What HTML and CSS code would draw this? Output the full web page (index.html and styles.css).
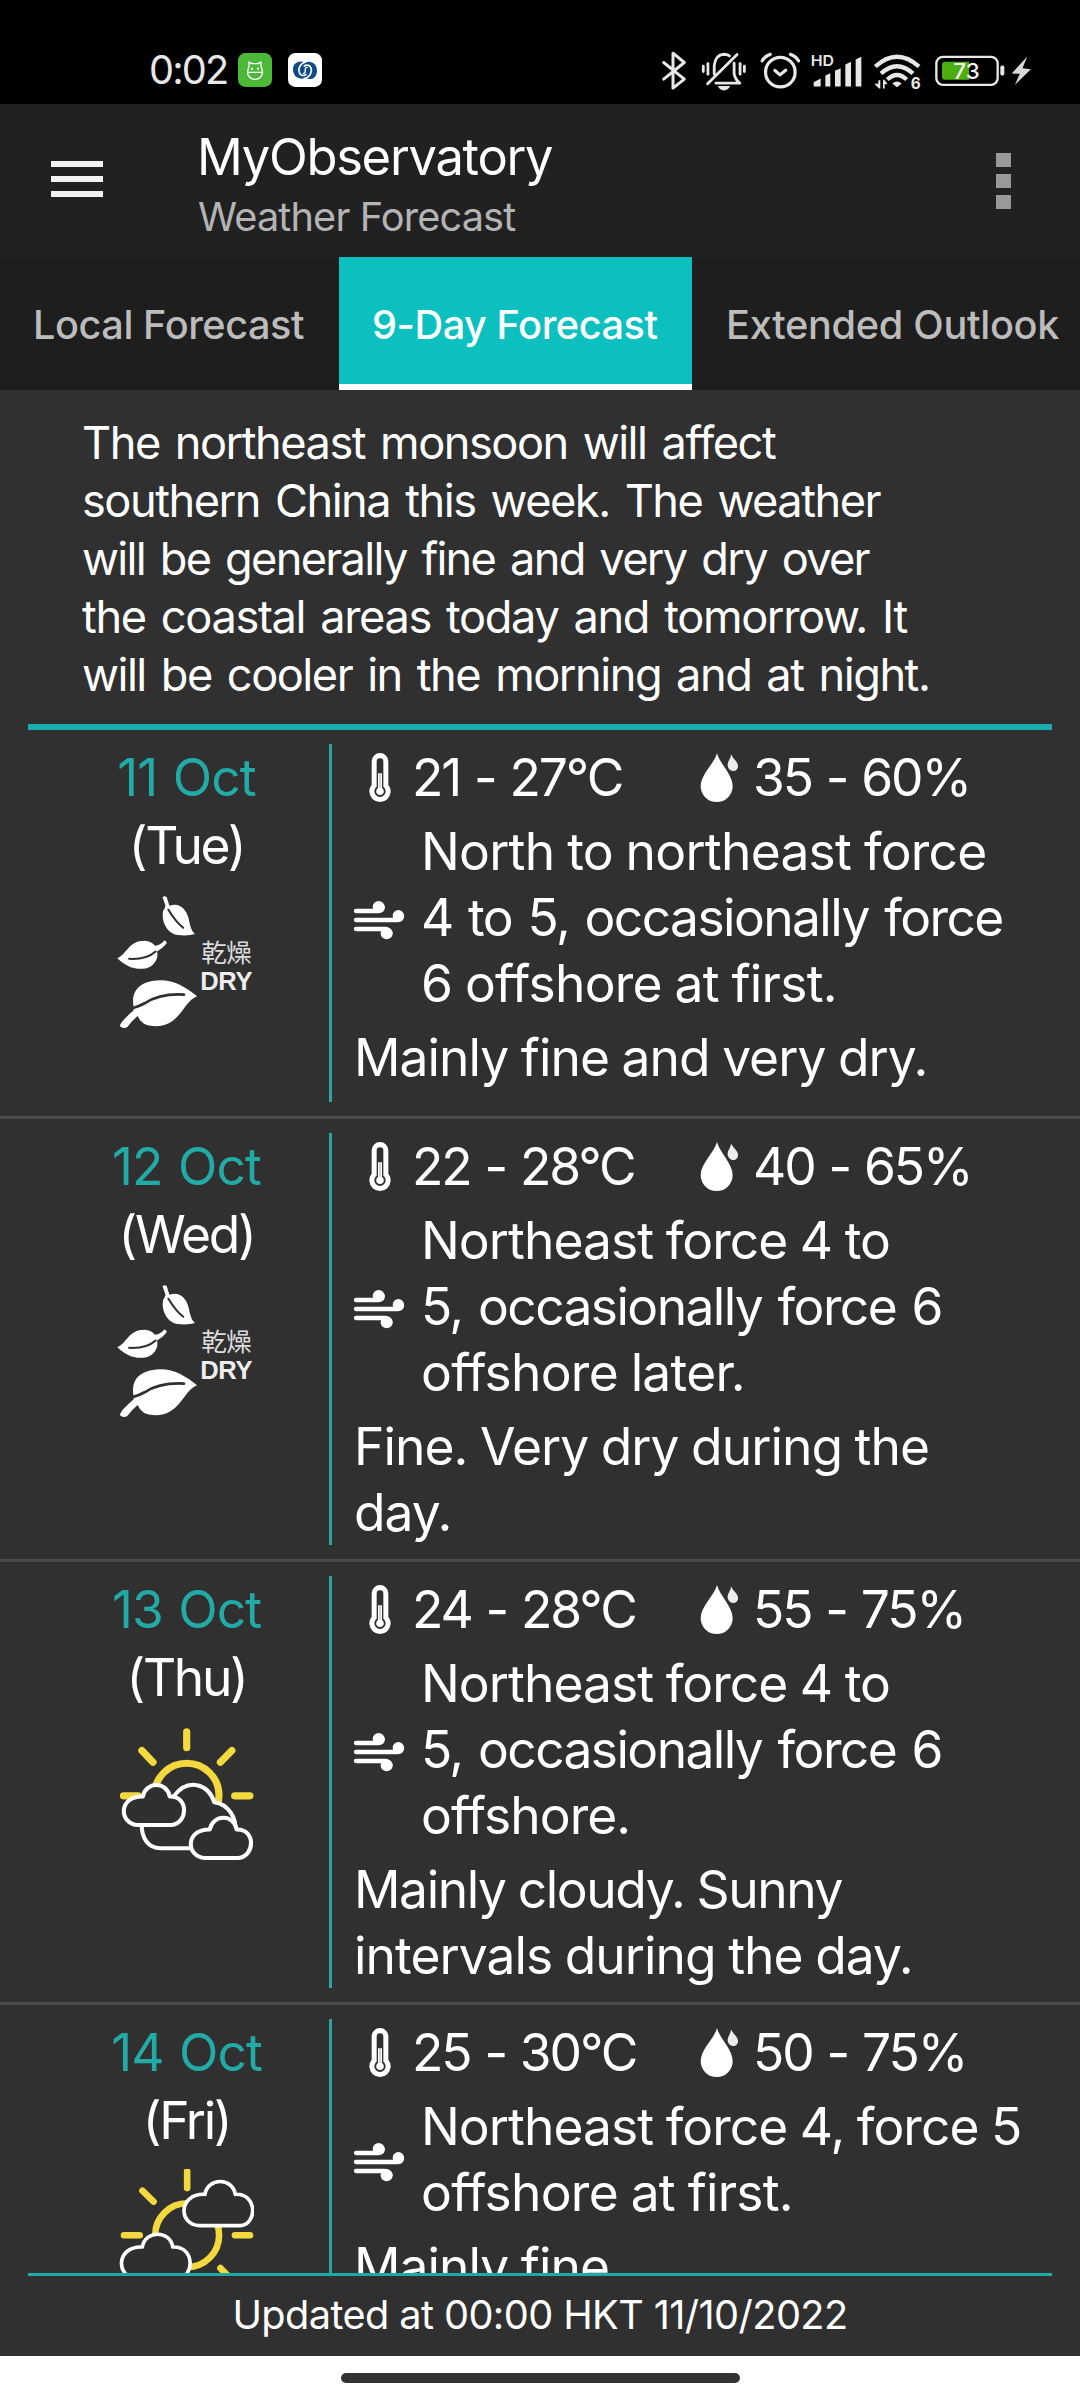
FILE: index.html
```html
<!DOCTYPE html>
<html lang="en">
<head>
<meta charset="utf-8">
<title>MyObservatory</title>
<link rel="stylesheet" href="styles.css">
</head>
<body>
<svg class="defs" aria-hidden="true">
  <symbol id="thermo" viewBox="72 36 66 147">
    <path fill="#fff" d="M80 61a25 25 0 0 1 50 0V131a32 32 0 1 1-50 0Z"/>
    <path fill="#303030" d="M95 62a10 10 0 0 1 20 0V137a17 17 0 1 1-20 0Z"/>
    <path fill="#fff" d="M99 97H111V141a11.500 11.500 0 1 1-12 0Z"/>
    <path stroke="#777" stroke-width="2" d="M105 97V140"/>
  </symbol>
  <symbol id="drop" viewBox="1066 36 114 147">
    <path fill="#fff" d="M1117 36C1124 66 1164 100 1164 136A48 47 0 0 1 1068 136C1068 100 1110 66 1117 36Z"/>
    <path fill="#ececec" d="M1159 40C1164 53 1180 62 1180 75C1180 86 1172 91 1165 90C1154 89 1148 79 1149 70C1150 60 1159 52 1159 40Z"/>
  </symbol>
  <symbol id="wind" viewBox="24 480 156 120">
    <g fill="none" stroke="#fff" stroke-width="13" stroke-linecap="round">
      <path d="M33 513H100Q113 512 113 501M33 540H158Q171 539 171 527M33 567H118Q131 567 136 580"/>
    </g>
    <g fill="#fff"><circle cx="101" cy="501" r="18"/><circle cx="160" cy="527" r="17"/><circle cx="125" cy="580" r="18"/></g>
  </symbol>
  <symbol id="dry" viewBox="340 525 400 410" preserveAspectRatio="none">
    <g fill="#fff">
      <path d="M472 535Q477 529 484 534L492 560C525 548 545 575 550 610Q555 635 566 645Q545 652 515 648C480 640 468 600 474 575Q482 562 480 558Z"/>
      <path d="M341 717C370 705 372 665 420 665Q440 666 450 680Q468 677 477 664Q486 666 483 674Q470 690 456 697C462 720 445 749 410 749C380 749 360 735 341 717Z"/>
      <path d="M388 862C380 815 405 785 465 783C510 783 540 805 572 831C530 848 525 920 450 921Q410 920 400 890Q382 905 370 923Q358 930 348 920Q352 905 388 874Z"/>
    </g>
    <g fill="none" stroke="#303030" stroke-linecap="round">
      <path stroke-width="6" d="M489 572Q510 608 532 626M375 719Q425 722 452 697"/>
      <path stroke-width="8" d="M386 866Q400 863 420 852Q465 822 534 826"/>
    </g>
    <text class="dry-zh" x="584" y="729" textLength="146" lengthAdjust="spacingAndGlyphs">乾燥</text>
    <text class="dry-en" x="581" y="812" textLength="151" lengthAdjust="spacingAndGlyphs">DRY</text>
  </symbol>
  <symbol id="cloudy" viewBox="340 560 400 402" preserveAspectRatio="none">
    <g fill="none" stroke="#f4d93e" stroke-width="21" stroke-linecap="round">
      <path d="M542 577V625M410 633L443 668M675 633L641 668M356 768H400M683 768H728"/>
      <circle cx="542" cy="766" r="95"/>
    </g>
    <g fill="#302f2f" stroke="#fff" stroke-width="12" stroke-linejoin="round">
      <path d="M505 768C545 715 605 730 623 787C665 792 690 835 685 875L660 924H465C430 924 408 895 410 850Z"/>
      <path d="M399 855C342 852 340 768 413 770C422 724 484 724 492 770C548 768 547 850 497 855Z"/>
      <path d="M596 953C539 950 537 866 610 868C619 822 681 822 689 868C745 866 744 948 694 953Z"/>
    </g>
  </symbol>
  <symbol id="sunny" viewBox="21 30 413 410" overflow="visible">
    <g fill="none" stroke="#f4d93e" stroke-width="20" stroke-linecap="round">
      <path d="M231 37V88M95 96L129 129M39 231H87M376 231H422M332 331L370 370"/>
      <circle cx="231" cy="231" r="97"/>
    </g>
    <g fill="#302f2f" stroke="#fff" stroke-width="11" stroke-linejoin="round">
      <path d="M268 202C202 199 205 103 285 107C293 55 370 55 377 107C446 103 444 200 392 202Z"/>
      <path d="M78 362C12 359 15 263 95 267C103 215 180 215 187 267C256 263 254 360 202 362Z"/>
    </g>
  </symbol>
</svg>

<div class="status">
  <span class="clock">0:02</span>
  <svg class="app" viewBox="324 39 102 102">
    <rect x="324" y="39" width="102" height="102" rx="22" fill="#4cb838"/>
    <g fill="none" stroke="#fff" stroke-width="4" stroke-linejoin="round"><path d="M357 78V66L366 71H384L393 66V78Q400 98 395 106Q388 118 375 118Q362 118 355 106Q350 98 357 78ZM351 97H399"/></g>
    <circle cx="366" cy="86" r="3.500" fill="#fff"/><circle cx="384" cy="86" r="3.500" fill="#fff"/>
  </svg>
  <svg class="app" viewBox="474 39 102 102">
    <rect x="474" y="39" width="102" height="102" rx="22" fill="#fff"/>
    <path fill="#0f4c86" d="M489 88C489 68 508 60 525 67C545 60 561 72 561 92C561 113 545 122 526 115C505 120 489 109 489 88Z"/>
    <path fill="none" stroke="#fff" stroke-width="5" stroke-linecap="round" d="M527 66C508 71 501 91 512 104Q520 109 528 104M523 116C542 110 550 91 539 78Q531 73 523 78"/>
    <path fill="none" stroke="#fff" stroke-width="4" stroke-linecap="round" d="M531 82C520 82 531 101 520 100"/>
  </svg>
  <div class="status-icons">
    <svg width="35" height="41" viewBox="60 28 105 122"><path fill="none" stroke="#e8e8e8" stroke-width="9" stroke-linejoin="round" stroke-linecap="round" d="M71 65L133 115L99 142V37L133 65L71 115"/></svg>
    <svg width="58" height="41" viewBox="165 28 175 122"><g fill="none" stroke="#e8e8e8" stroke-width="8.500" stroke-linecap="round" stroke-linejoin="round"><path d="M203 129L292 41M223 100V75Q226 42 252 40Q262 40 269 45M283 67V100Q287 117 300 127H228M190 76V92M204 68V100M301 68V100M314 76V92"/></g><path fill="#e8e8e8" d="M234 136H271Q265 149 252 149Q240 149 234 136Z"/></svg>
    <svg width="54" height="41" viewBox="340 28 160 122"><g fill="none" stroke="#e8e8e8" stroke-width="9.500" stroke-linecap="round" stroke-linejoin="round"><circle cx="421" cy="94" r="44"/><path d="M405 89L420 102L437 88M367 60Q375 46 391 41M475 60Q467 46 451 41"/></g></svg>
    <svg width="60" height="41" viewBox="500 28 180 122"><g fill="#e8e8e8"><path d="M520 137V124L541 113V137ZM555 137V104L570 97V137ZM584 137V90L601 82V137ZM615 137V71L632 63V137ZM646 137V56L663 48V137Z"/><text class="hd" x="511" y="77" textLength="70" lengthAdjust="spacingAndGlyphs">HD</text></g></svg>
    <svg width="60" height="41" viewBox="680 28 180 122"><g fill="none" stroke="#e8e8e8" stroke-width="13"><path d="M705 77Q770 18 836 77M722 98Q770 54 818 98M741 116Q770 89 799 116"/></g><g fill="#e8e8e8"><path d="M756 128Q770 116 784 128L770 139Z"/><path d="M714 118H720V143H716L702 129H714ZM728 143V117H732L742 130H733V143Z"/><text class="six" x="811" y="145">6</text></g></svg>
    <svg width="80" height="41" viewBox="860 28 240 122"><rect x="888" y="48" width="184" height="84" rx="20" fill="none" stroke="#e8e8e8" stroke-width="7"/><path fill="#4caf0f" d="M914 63H986V117H914Q905 117 905 107V73Q905 63 914 63Z"/><rect x="1080" y="74" width="12" height="30" rx="5" fill="#e8e8e8"/><text class="pct" x="939" y="114" textLength="79" lengthAdjust="spacingAndGlyphs">73</text></svg>
    <svg width="27" height="41" viewBox="1100 28 80 122"><path fill="#d9d9d9" d="M1160 47L1114 98L1138 99L1123 132L1171 85L1146 82Z"/></svg>
  </div>
</div>

<header class="appbar">
  <div class="burger"><i></i><i></i><i></i></div>
  <div class="titles"><h1>MyObservatory</h1><p>Weather Forecast</p></div>
  <div class="more"><i></i><i></i><i></i></div>
</header>

<nav class="tabs">
  <div class="tab tab-local">Local Forecast</div>
  <div class="tab tab-nine active">9-Day Forecast</div>
  <div class="tab tab-ext">Extended Outlook</div>
</nav>

<p class="situation">The northeast monsoon will affect<br>southern China this week. The weather<br><span class="snug">will be generally fine and very dry over</span><br><span class="loose">the coastal areas today and tomorrow. It</span><br>will be cooler in the morning and at night.</p>
<div class="rule"></div>

<main class="days">
  <section class="day">
    <div class="when"><b>11 Oct</b><span>(Tue)</span><svg class="wx"><use href="#dry"/></svg></div>
    <div class="info">
      <div class="head"><svg class="thermo"><use href="#thermo"/></svg><span class="temp">21 - 27°C</span><svg class="drop"><use href="#drop"/></svg><span class="rh">35 - 60%</span></div>
      <div class="wind"><svg><use href="#wind"/></svg><p><span class="wide">North to northeast force</span><br><span class="force">4 to 5, occasionally force</span><br><span class="wide">6 offshore at first.</span></p></div>
      <p class="desc">Mainly fine and very dry.</p>
    </div>
  </section>
  <section class="day">
    <div class="when"><b>12 Oct</b><span>(Wed)</span><svg class="wx"><use href="#dry"/></svg></div>
    <div class="info">
      <div class="head"><svg class="thermo"><use href="#thermo"/></svg><span class="temp">22 - 28°C</span><svg class="drop"><use href="#drop"/></svg><span class="rh">40 - 65%</span></div>
      <div class="wind"><svg><use href="#wind"/></svg><p>Northeast force 4 to<br><span class="force">5, occasionally force 6</span><br><span class="wide">offshore later.</span></p></div>
      <p class="desc">Fine. Very dry during the<br>day.</p>
    </div>
  </section>
  <section class="day">
    <div class="when"><b>13 Oct</b><span>(Thu)</span><svg class="wx sun"><use href="#cloudy"/></svg></div>
    <div class="info">
      <div class="head"><svg class="thermo"><use href="#thermo"/></svg><span class="temp">24 - 28°C</span><svg class="drop"><use href="#drop"/></svg><span class="rh">55 - 75%</span></div>
      <div class="wind"><svg><use href="#wind"/></svg><p>Northeast force 4 to<br><span class="force">5, occasionally force 6</span><br>offshore.</p></div>
      <p class="desc"><span class="tight">Mainly cloudy. Sunny</span><br>intervals during the day.</p>
    </div>
  </section>
  <section class="day">
    <div class="when"><b>14 Oct</b><span>(Fri)</span><svg class="wx sun"><use href="#sunny"/></svg></div>
    <div class="info">
      <div class="head"><svg class="thermo"><use href="#thermo"/></svg><span class="temp">25 - 30°C</span><svg class="drop"><use href="#drop"/></svg><span class="rh">50 - 75%</span></div>
      <div class="wind"><svg><use href="#wind"/></svg><p>Northeast force 4, force 5<br><span class="wide">offshore at first.</span></p></div>
      <p class="desc">Mainly fine.</p>
    </div>
  </section>
</main>

<footer class="updated">Updated at 00:00 HKT 11/10/2022</footer>
<div class="gesture"><div class="pill"></div></div>
</body>
</html>
```
FILE: styles.css
```css
* { box-sizing: border-box; margin: 0; padding: 0; }
body {
  width: 1080px; height: 2400px; overflow: hidden;
  display: flex; flex-direction: column;
  background: #303030; color: #fff;
  font-family: Inter, "Noto Sans", "Noto Sans CJK TC", sans-serif;
  white-space: nowrap;
}
svg { display: block; flex: none; }
.defs { display: none; }

.status { flex: none; height: 104px; padding: 36px 46px 0 149px; display: flex; align-items: center; background: #000; color: #e8e8e8; }
.clock { width: 89px; font-size: 39.700px; letter-spacing: -1.850px; line-height: 48px; }
.app { width: 34px; height: 34px; margin-right: 16.400px; }
.status-icons { display: flex; margin-left: auto; }
.hd { font: 600 44px Inter, sans-serif; }
.six { font: 700 46px Inter, sans-serif; }
.pct { font: 500 66px Inter, sans-serif; fill: #f4f4f4; }

.appbar { flex: none; height: 153px; padding: 23px 69px 0 51px; display: flex; background: #212121; }
.burger { width: 52px; height: 36px; margin-top: 34px; display: flex; flex-direction: column; justify-content: space-between; }
.burger i { height: 6px; background: #f2f2f2; }
.titles { margin-left: 94px; flex: 1; }
.titles h1 { font-size: 50.700px; font-weight: 400; line-height: 60px; letter-spacing: -1.290px; }
.titles p { margin: 6px 0 0 1px; font-size: 39.700px; line-height: 48px; letter-spacing: -0.850px; color: #b4b4b4; }
.more { width: 15px; height: 56px; margin-top: 26px; display: flex; flex-direction: column; justify-content: space-between; }
.more i { height: 14px; background: #999; }

.tabs { flex: none; height: 133px; display: flex; background: #1e1e1e; color: #bcbcbc; }
.tab { padding: 2px 0 0 33px; font-size: 39.700px; font-weight: 500; line-height: 133px; letter-spacing: -0.450px; }
.tab-local { width: 339px; }
.tab-nine { width: 353px; }
.tab-ext { flex: 1; padding-left: 34px; letter-spacing: -0.300px; }
.tab.active { background: #0bc0bf; color: #fff; border-bottom: 6px solid #fff; }

.situation { flex: none; padding: 24px 0 20px 82px; font-size: 45.200px; line-height: 58px; letter-spacing: -1.500px; word-spacing: 3.800px; }
.snug { letter-spacing: -1.720px; }
.loose { letter-spacing: -1.380px; }
.rule { flex: none; height: 6px; margin: 0 28px; background: #18adb0; }

.days { flex: none; height: 1543px; overflow: hidden; font-size: 51.500px; line-height: 66px; letter-spacing: -0.950px; word-spacing: -1px; }
.day { display: flex; padding: 14px 0; border-bottom: 3px solid #4a4a4a; }
.when { width: 332px; min-height: 358px; padding-left: 44px; border-right: 3px solid #2da5a0; display: flex; flex-direction: column; align-items: center; gap: 1px; line-height: 67px; }
.when b { font-weight: 400; color: #22aaa6; word-spacing: 2px; }
.when span { letter-spacing: -2.300px; }
.wx { width: 138px; height: 137px; margin: 14px 2px 0 0; }
.sun { width: 136px; height: 135px; }
.dry-zh { font: 400 76px "Noto Sans CJK TC", sans-serif; fill: #ddd; }
.dry-en { font: 700 78px "Liberation Sans", Arial, sans-serif; fill: #eee; }
.info { display: flex; flex-direction: column; gap: 8px; }
.head { display: flex; align-items: center; padding-left: 37px; }
.thermo { width: 22px; height: 49px; }
.temp { width: 288px; margin-left: 21px; letter-spacing: -2.100px; word-spacing: 1.500px; }
.drop { width: 38px; height: 49px; }
.rh { margin-left: 15px; letter-spacing: -2.100px; word-spacing: 1.500px; }
.wind { display: flex; align-items: center; padding-left: 21px; gap: 16px; }
.wind svg { width: 52px; height: 40px; margin-top: 6px; }
.desc { padding-left: 22px; }
.wide { letter-spacing: -0.750px; }
.tight { letter-spacing: -1.400px; }
.force { letter-spacing: -1.580px; word-spacing: 2.500px; }

.updated { flex: none; height: 83px; margin: 0 28px; padding-bottom: 2px; border-top: 3px solid #20a8a5; font-size: 39.700px; line-height: 78px; letter-spacing: -0.590px; text-align: center; }
.gesture { flex: 1; background: #fff; padding-top: 17px; }
.pill { width: 399px; height: 10px; margin: 0 auto; border-radius: 5px; background: #333; }
```
